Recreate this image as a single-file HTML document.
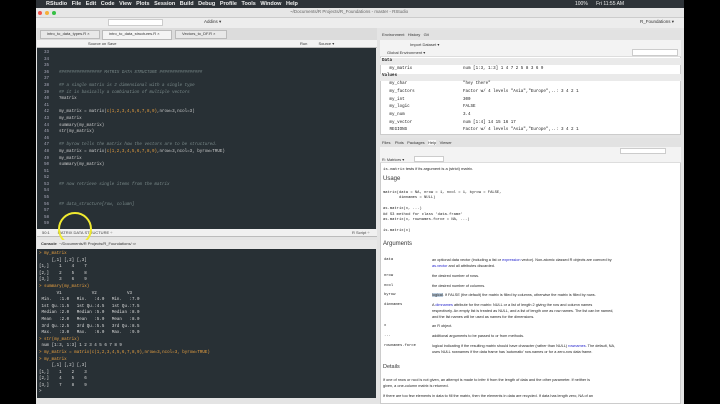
<!DOCTYPE html>
<html><head><meta charset="utf-8"><style>
*{margin:0;padding:0;box-sizing:border-box}
body{width:720px;height:404px;background:#000;position:relative;overflow:hidden;font-family:"Liberation Sans",sans-serif}
.a{position:absolute;white-space:pre}
.m{font-family:"Liberation Mono",monospace}
.k{position:absolute;left:384px;font-family:"Liberation Mono",monospace;font-size:3.8px;color:#222;white-space:pre}
.d{position:absolute;left:432px;font-size:3.8px;color:#222;line-height:5.8px;white-space:pre}
</style></head><body>
<div class="a" style="left:36px;top:0;width:648px;height:8px;background:#2e3338"></div>
<div class="a" style="left:43px;top:0;font-size:5.5px;color:#eee;line-height:8px;font-weight:bold">  RStudio   File   Edit   Code   View   Plots   Session   Build   Debug   Profile   Tools   Window   Help</div>
<div class="a" style="left:575px;top:0;font-size:5px;color:#eee;line-height:8px">100%      Fri 11:55 AM</div>
<div class="a" style="left:36px;top:8px;width:648px;height:396px;background:#e4e4e4"></div>
<div class="a" style="left:36px;top:8px;width:648px;height:10px;background:#e6e6e6;border-bottom:1px solid #ccc"></div>
<div class="a" style="left:38px;top:11px;width:4px;height:4px;border-radius:50%;background:#f2544c"></div>
<div class="a" style="left:45px;top:11px;width:4px;height:4px;border-radius:50%;background:#f5b03a"></div>
<div class="a" style="left:52px;top:11px;width:4px;height:4px;border-radius:50%;background:#36c044"></div>
<div class="a" style="left:290px;top:9px;font-size:4.5px;color:#666">~/Documents/R Projects/R_Foundations - master - RStudio</div>
<div class="a" style="left:36px;top:18px;width:648px;height:10px;background:#ededed"></div>
<div class="a" style="left:108px;top:19px;width:55px;height:7px;background:#fff;border:1px solid #ccc"></div>
<div class="a" style="left:204px;top:19px;font-size:4.5px;color:#333">Addins ▾</div>
<div class="a" style="left:640px;top:19px;font-size:4.5px;color:#333">R_Foundations ▾</div>
<div class="a" style="left:37px;top:28px;width:340px;height:12px;background:#dcdcdc"></div>
<div class="a" style="left:40px;top:30px;width:60px;height:9px;background:#e8e8e8;border:1px solid #bbb;font-size:4px;color:#333;padding-left:6px">intro_to_data_types.R ×</div>
<div class="a" style="left:102px;top:30px;width:70px;height:10px;background:#f4f4f4;border:1px solid #bbb;font-size:4px;color:#333;padding-left:6px">intro_to_data_structures.R ×</div>
<div class="a" style="left:175px;top:30px;width:52px;height:9px;background:#e8e8e8;border:1px solid #bbb;font-size:4px;color:#333;padding-left:6px">Vectors_to_DF.R ×</div>
<div class="a" style="left:37px;top:40px;width:340px;height:8px;background:#f2f2f2;border-bottom:1px solid #bbb"></div>
<div class="a" style="left:88px;top:41px;font-size:4px;color:#333">Source on Save</div>
<div class="a" style="left:300px;top:41px;font-size:4px;color:#333">Run          Source ▾</div>
<div class="a" style="left:37px;top:48px;width:339px;height:181px;background:#283035"></div>
<div class="a m" style="left:44px;top:50px;font-size:4.2px;line-height:6.6px;color:#aab;text-align:right">33
34
35
36
37
38
39
40
41
42
43
44
45
46
47
48
49
50
51
52
53
54
55
56
57
58
59</div>
<div class="a m" style="left:59px;top:50px;font-size:4.2px;line-height:6.6px;color:#ccc">


<span style="color:#7a8a8a;font-style:italic">################# MATRIX DATA STRUCTURE #################</span>

<span style="color:#7a8a8a;font-style:italic">## a single matrix is 2 dimensional with a single type</span>
<span style="color:#7a8a8a;font-style:italic">## it is basically a combination of multiple vectors</span>
?matrix

my_matrix = matrix(<span style="color:#e8a040">c(1,2,3,4,5,6,7,8,9)</span>,nrow=3,ncol=3)
my_matrix
summary(my_matrix)
str(my_matrix)

<span style="color:#7a8a8a;font-style:italic">## byrow tells the matrix how the vectors are to be structured.</span>
my_matrix = matrix(<span style="color:#e8a040">c(1,2,3,4,5,6,7,8,9)</span>,nrow=3,ncol=3, byrow=TRUE)
my_matrix
summary(my_matrix)


<span style="color:#7a8a8a;font-style:italic">## now retrieve single items from the matrix</span>


<span style="color:#7a8a8a;font-style:italic">## data_structure[row, column]</span></div>
<div class="a" style="left:37px;top:229px;width:340px;height:8px;background:#f0f0f0;border-bottom:1px solid #bbb"></div>
<div class="a" style="left:42px;top:230px;font-size:4px;color:#444">50:1       MATRIX DATA STRUCTURE ÷</div>
<div class="a" style="left:352px;top:230px;font-size:4px;color:#444">R Script ÷</div>
<div class="a" style="left:58px;top:212px;width:34px;height:34px;border-radius:50%;border:2px solid #f0ea30"></div>
<div class="a" style="left:37px;top:240px;width:340px;height:9px;background:#e8e8e8"></div>
<div class="a" style="left:41px;top:241px;font-size:4px;color:#333"><b>Console</b>  ~/Documents/R Projects/R_Foundations/ ⇨</div>
<div class="a" style="left:37px;top:249px;width:339px;height:149px;background:#283035"></div>
<div class="a m" style="left:39px;top:251px;font-size:4.2px;line-height:6.6px;color:#ddd"><span style="color:#e8a040">&gt; my_matrix</span>
     [,1] [,2] [,3]
[1,]    1    4    7
[2,]    2    5    8
[3,]    3    6    9
<span style="color:#e8a040">&gt; summary(my_matrix)</span>
       V1            V2            V3     
 Min.   :1.0   Min.   :4.0   Min.   :7.0  
 1st Qu.:1.5   1st Qu.:4.5   1st Qu.:7.5  
 Median :2.0   Median :5.0   Median :8.0  
 Mean   :2.0   Mean   :5.0   Mean   :8.0  
 3rd Qu.:2.5   3rd Qu.:5.5   3rd Qu.:8.5  
 Max.   :3.0   Max.   :6.0   Max.   :9.0  
<span style="color:#e8a040">&gt; str(my_matrix)</span>
 num [1:3, 1:3] 1 2 3 4 5 6 7 8 9
<span style="color:#e8a040">&gt; my_matrix = matrix(c(1,2,3,4,5,6,7,8,9),nrow=3,ncol=3, byrow=TRUE)</span>
<span style="color:#e8a040">&gt; my_matrix</span>
     [,1] [,2] [,3]
[1,]    1    2    3
[2,]    4    5    6
[3,]    7    8    9
&gt;</div>
<div class="a" style="left:380px;top:30px;width:301px;height:105px;background:#fff;border:1px solid #ccc"></div>
<div class="a" style="left:380px;top:30px;width:301px;height:10px;background:#e2e2e2"></div>
<div class="a" style="left:382px;top:32px;font-size:4px;color:#333">Environment   History   Git</div>
<div class="a" style="left:380px;top:40px;width:301px;height:17px;background:#f3f3f3;border-bottom:1px solid #ddd"></div>
<div class="a" style="left:410px;top:42px;font-size:4px;color:#333">Import Dataset ▾</div>
<div class="a" style="left:387px;top:50px;font-size:4px;color:#333">Global Environment ▾</div>
<div class="a" style="left:632px;top:49px;width:46px;height:7px;background:#fff;border:1px solid #ccc"></div>
<div class="a" style="left:380px;top:58px;width:301px;height:7px;background:#eaeaea"></div>
<div class="a" style="left:380px;top:74px;width:301px;height:7px;background:#eaeaea"></div>
<div class="a m" style="left:382px;top:58px;font-size:4.2px;line-height:7.7px;color:#222"><b>Data</b>
   my_matrix
<b>Values</b>
   my_char
   my_factors
   my_int
   my_logic
   my_num
   my_vector
   REGIONS</div>
<div class="a m" style="left:463px;top:65.7px;font-size:4.2px;line-height:7.7px;color:#222">num [1:3, 1:3] 1 4 7 2 5 8 3 6 9

"hey there"
Factor w/ 4 levels "Asia","Europe",..: 3 4 2 1
300
FALSE
3.4
num [1:4] 14 15 16 17
Factor w/ 4 levels "Asia","Europe",..: 3 4 2 1</div>
<div class="a" style="left:380px;top:138px;width:301px;height:266px;background:#fff;border:1px solid #ccc"></div>
<div class="a" style="left:380px;top:138px;width:301px;height:9px;background:#e2e2e2"></div>
<div class="a" style="left:382px;top:140px;font-size:4px;color:#333">Files    Plots   Packages   <span style="background:#f6f6f6">Help</span>   Viewer</div>
<div class="a" style="left:380px;top:147px;width:301px;height:16px;background:#f3f3f3;border-bottom:1px solid #ddd"></div>
<div class="a" style="left:620px;top:148px;width:46px;height:6px;background:#fff;border:1px solid #ccc"></div>
<div class="a" style="left:382px;top:157px;font-size:3.8px;color:#333">R: Matrices ▾</div>
<div class="a" style="left:414px;top:156px;width:30px;height:6px;background:#fff;border:1px solid #ccc"></div>
<div class="a" style="left:383px;top:166px;font-size:4px;color:#222"><span class="m">is.matrix</span> tests if its argument is a (strict) matrix.</div>
<div class="a" style="left:383px;top:176px;font-size:6px;color:#333">Usage</div>
<div class="a m" style="left:383px;top:191px;font-size:3.8px;line-height:5.4px;color:#222">matrix(data = NA, nrow = 1, ncol = 1, byrow = FALSE,
       dimnames = NULL)

as.matrix(x, ...)
## S3 method for class 'data.frame'
as.matrix(x, rownames.force = NA, ...)

is.matrix(x)</div>
<div class="a" style="left:383px;top:241px;font-size:6px;color:#333">Arguments</div>
<div class="k" style="top:258px">data</div>
<div class="k" style="top:274px">nrow</div>
<div class="k" style="top:284px">ncol</div>
<div class="k" style="top:293px">byrow</div>
<div class="k" style="top:303px">dimnames</div>
<div class="k" style="top:324px">x</div>
<div class="k" style="top:334px">...</div>
<div class="k" style="top:344px">rownames.force</div>
<div class="d" style="top:258px">an optional data vector (including a list or <span style="color:#22c">expression</span> vector). Non-atomic classed R objects are coerced by
<span style="color:#22c">as.vector</span> and all attributes discarded.</div>
<div class="d" style="top:274px">the desired number of rows.</div>
<div class="d" style="top:284px">the desired number of columns.</div>
<div class="d" style="top:293px"><span style="background:#bcd">logical</span>. If FALSE (the default) the matrix is filled by columns, otherwise the matrix is filled by rows.</div>
<div class="d" style="top:303px">A <span style="color:#22c">dimnames</span> attribute for the matrix: NULL or a list of length 2 giving the row and column names
respectively. An empty list is treated as NULL, and a list of length one as row names. The list can be named,
and the list names will be used as names for the dimensions.</div>
<div class="d" style="top:324px">an R object.</div>
<div class="d" style="top:334px">additional arguments to be passed to or from methods.</div>
<div class="d" style="top:344px">logical indicating if the resulting matrix should have character (rather than NULL) <span style="color:#22c">rownames</span>. The default, NA,
uses NULL rownames if the data frame has 'automatic' row.names or for a zero-row data frame.</div>
<div class="a" style="left:383px;top:364px;font-size:5.5px;color:#333">Details</div>
<div class="a" style="left:383px;top:378px;font-size:3.8px;color:#222;line-height:5.8px">If one of nrow or ncol is not given, an attempt is made to infer it from the length of data and the other parameter. If neither is
given, a one-column matrix is returned.</div>
<div class="a" style="left:383px;top:394px;font-size:3.8px;color:#222">If there are too few elements in data to fill the matrix, then the elements in data are recycled. If data has length zero, NA of an</div>
</body></html>
